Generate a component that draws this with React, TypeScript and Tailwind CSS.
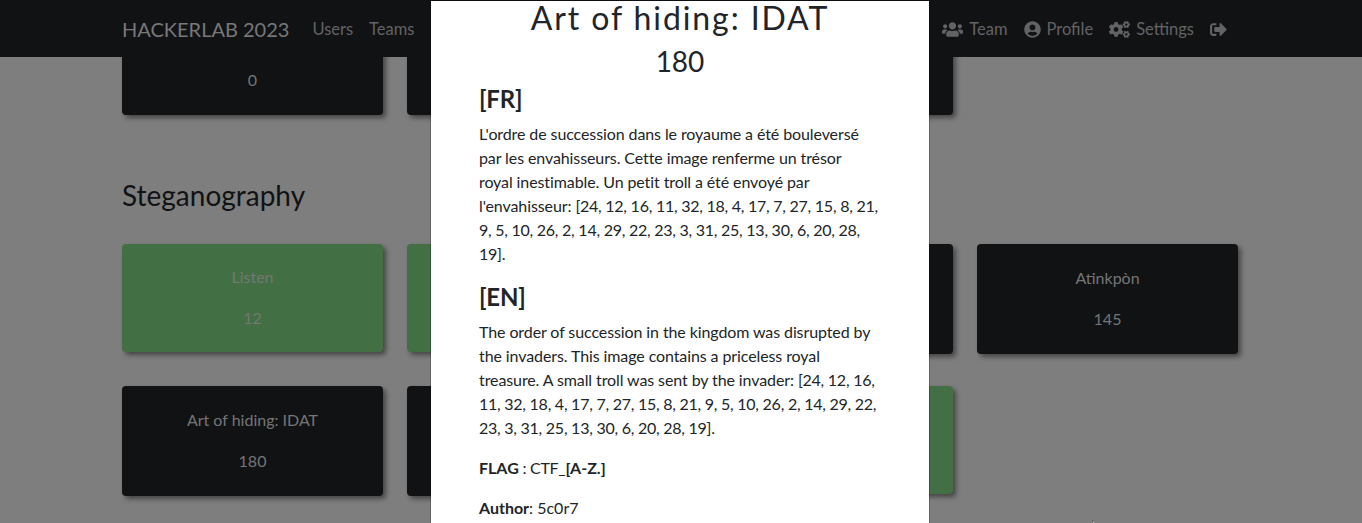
import { FaUsers, FaUserCircle, FaCogs, FaSignOutAlt } from "react-icons/fa";

type Chal = { name: string; points: number; solved?: boolean };

const rowA: Chal[] = [
  { name: "Listen", points: 12, solved: true },
  { name: "Whisper", points: 50, solved: true },
  { name: "Hidden", points: 100 },
  { name: "Atinkpòn", points: 145 },
];

const rowB: Chal[] = [
  { name: "Art of hiding: IDAT", points: 180 },
  { name: "Art of hiding: LSB", points: 200 },
  { name: "Art of hiding: EOF", points: 60, solved: true },
];

const ORDER = "[24, 12, 16, 11, 32, 18, 4, 17, 7, 27, 15, 8, 21, 9, 5, 10, 26, 2, 14, 29, 22, 23, 3, 31, 25, 13, 30, 6, 20, 28, 19].";

function ChalCard({ chal }: { chal: Chal }) {
  const tone = chal.solved
    ? "bg-[#426f43] h-[108px] text-[#747874] pt-[21px]"
    : "bg-[#111214] h-[110px] text-[#757677] pt-[22px]";
  return (
    <div className={`w-[261px] rounded shadow-[3px_3px_5px_rgba(0,0,0,0.45)] text-center ${tone}`}>
      <div className="leading-6">{chal.name}</div>
      <div className="mt-[17px] leading-6">{chal.points}</div>
    </div>
  );
}

function Navbar() {
  return (
    <nav className="relative z-10 h-[57px] bg-[#111214] pl-[122px] pr-[135px] flex items-center text-[16.5px] text-[#626364]">
      <span className="text-[20px] text-[#777879] mr-6">HACKERLAB 2023</span>
      <div className="flex gap-4 -ml-px pt-0.5">
        <span>Users</span>
        <span>Teams</span>
        <span>Scoreboard</span>
        <span>Challenges</span>
      </div>
      <div className="ml-auto flex items-center gap-4 pt-0.5">
        <span className="flex items-center gap-[6px]"><FaUsers className="text-[21px]" />Team</span>
        <span className="flex items-center gap-[6px]"><FaUserCircle className="text-[17px]" />Profile</span>
        <span className="flex items-center gap-[6px]"><FaCogs className="text-[21px]" />Settings</span>
        <FaSignOutAlt className="text-[17px]" />
      </div>
    </nav>
  );
}

function Modal() {
  return (
    <div className="absolute z-30 top-0 left-[430px] w-[500px] h-[560px] bg-white bg-clip-padding border border-black/20 text-[#212529] pl-12 pr-[51px]">
      <h3 className="text-[32px] tracking-[1.9px] leading-[34px] text-center -mr-[3px]">Art of hiding: IDAT</h3>
      <h4 className="text-[28px] leading-[34px] text-center mt-[9px] -mr-[3px]">180</h4>
      <h5 className="text-[24px] font-bold tracking-[-0.2px] leading-[29px] mt-[6px]">[FR]</h5>
      <p className="mt-[9px] leading-6 tracking-[-0.1px]">
        L'ordre de succession dans le royaume a été bouleversé par les envahisseurs. Cette image renferme un trésor royal inestimable. Un petit troll a été envoyé par l'envahisseur: <span className="tracking-[-0.25px]">{ORDER}</span>
      </p>
      <h5 className="text-[24px] font-bold tracking-[-0.2px] leading-[29px] mt-[16px]">[EN]</h5>
      <p className="mt-[9px] leading-6 tracking-[-0.1px]">
        The order of succession in the kingdom was disrupted by the invaders. This image contains a priceless royal treasure. A small troll was sent by the invader: <span className="tracking-[-0.25px]">{ORDER}</span>
      </p>
      <p className="mt-4 leading-6"><b>FLAG</b><span className="tracking-[-0.3px]"> : CTF_</span><b>[A-Z.]</b></p>
      <p className="mt-4 leading-6"><b>Author</b>: 5c0r7</p>
    </div>
  );
}

export default function App() {
  return (
    <div className="relative h-[523px] overflow-hidden bg-[#7e7e7e] font-['Lato',sans-serif] text-base">
      <Navbar />
      <main className="pl-[122px] -mt-[53px]">
        {/* previous category, scrolled mostly under the navbar */}
        <div className="flex gap-6">
          {["0", "50", "100"].map((pts) => (
            <div key={pts} className="w-[261px] h-[111px] rounded bg-[#111214] shadow-[3px_3px_5px_rgba(0,0,0,0.45)] text-center text-[#757677] pt-[64px] leading-6">
              {pts}
            </div>
          ))}
        </div>
        <h2 className="text-[28px] text-[#111214] leading-[34px] mt-[63px]">Steganography</h2>
        <div className="flex gap-6 mt-[32px] items-start">
          {rowA.map((c) => <ChalCard key={c.name} chal={c} />)}
        </div>
        <div className="flex gap-6 mt-[32px] items-start">
          {rowB.map((c) => <ChalCard key={c.name} chal={c} />)}
        </div>
      </main>
      <Modal />
      <svg className="absolute z-40 left-[1092px] top-[520px]" width="8" height="12" viewBox="0 0 8 12">
        <path d="M0.5 0.5 L0.5 10 L3 8 L7 8 Z" fill="#fff" stroke="#222" strokeWidth="0.5" />
      </svg>
    </div>
  );
}
